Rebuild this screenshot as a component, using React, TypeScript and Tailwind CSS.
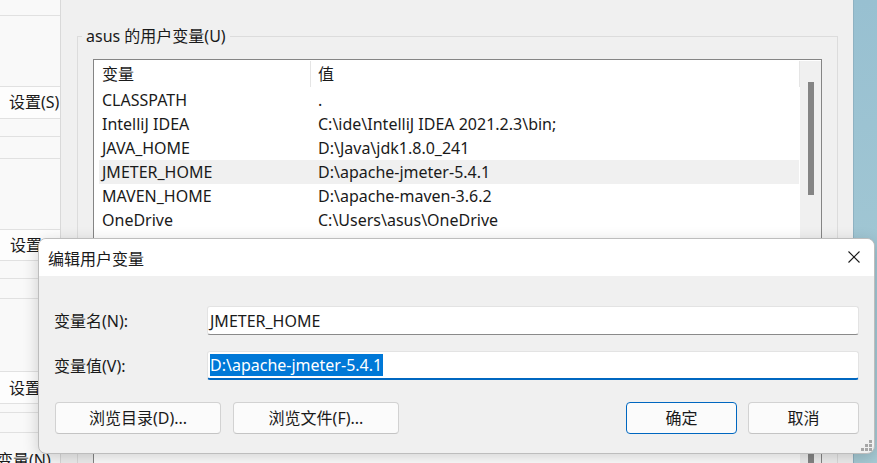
import React from "react";

const rows: [string, string][] = [
  ["CLASSPATH", "."],
  ["IntelliJ IDEA", "C:\\ide\\IntelliJ IDEA 2021.2.3\\bin;"],
  ["JAVA_HOME", "D:\\Java\\jdk1.8.0_241"],
  ["JMETER_HOME", "D:\\apache-jmeter-5.4.1"],
  ["MAVEN_HOME", "D:\\apache-maven-3.6.2"],
  ["OneDrive", "C:\\Users\\asus\\OneDrive"],
  ["OneDriveConsumer", "C:\\Users\\asus\\OneDrive"],
  ["Path", "C:\\Users\\asus\\AppData\\Local\\Microsoft\\WindowsApps;"],
  ["TEMP", "C:\\Users\\asus\\AppData\\Local\\Temp"],
  ["TMP", "C:\\Users\\asus\\AppData\\Local\\Temp"],
];

function LeftStrip() {
  const line = "border-b border-[#e1e1e1]";
  return (
    <div className="w-[61px] shrink-0 bg-[#f9f9f9] border-r border-[#d9d9d9] flex flex-col overflow-hidden text-[16px] leading-[20px] text-[#1a1a1a] whitespace-nowrap">
      <div className={`h-[16px] ${line}`} />
      <div className={`h-[71px] ${line}`} />
      <div className={`h-[32px] bg-[#fdfdfd] flex items-center pl-[9px] ${line}`}>设置(S).</div>
      <div className={`h-[18px] ${line}`} />
      <div className={`h-[22px] ${line}`} />
      <div className={`h-[71px] ${line}`} />
      <div className={`h-[32px] bg-[#fdfdfd] flex items-center pl-[10px] ${line}`}>设置</div>
      <div className={`h-[18px] ${line}`} />
      <div className={`h-[20px] ${line}`} />
      <div className={`h-[73px] ${line}`} />
      <div className={`h-[32px] bg-[#fdfdfd] flex items-center pl-[9px] ${line}`}>设置</div>
      <div className={`h-[9px] ${line}`} />
      <div className={`h-[20px] ${line}`} />
      <div className="h-[30px] flex items-end pl-0 -ml-[3px]">
        <span className="leading-[18px] -mb-[6px]">变量(N)...</span>
      </div>
    </div>
  );
}

function ListBox() {
  return (
    <div className="mx-[15px] mt-[22px] border border-[#858585] bg-white flex flex-1">
      <div className="flex-1 flex flex-col text-[16px] text-[#1a1a1a] whitespace-nowrap overflow-hidden">
        <div className="h-[28px] flex items-stretch shrink-0">
          <div className="w-[217px] border-r border-[#e5e5e5] my-[1px] pl-[8px] flex items-center">变量</div>
          <div className="flex-1 border-r border-[#e5e5e5] my-[1px] pl-[7px] flex items-center">值</div>
        </div>
        {rows.map(([k, v], i) => (
          <div
            key={k + i}
            className={`h-[24px] shrink-0 ml-[5px] mr-[1px] flex items-center ${k === "JMETER_HOME" ? "bg-[#f0f0f0]" : ""}`}
          >
            <div className="w-[219px] pl-[3px] overflow-hidden">{k}</div>
            <div className="flex-1 overflow-hidden">{v}</div>
          </div>
        ))}
      </div>
      <div className="w-[21px] shrink-0 bg-[#f0f0f0] mt-[1px] flex flex-col items-center">
        <div className="mt-[21px] w-[6px] h-[113px] bg-[#858585]" />
        <div className="mt-[259px] w-[6px] h-[12px] bg-[#858585]" />
      </div>
    </div>
  );
}

function Dialog() {
  return (
    <div className="absolute left-[38px] top-[238px] w-[837px] h-[216px] rounded-[8px] border border-[#bdbdbd] bg-[#f0f0f0] shadow-[0_4px_16px_rgba(0,0,0,0.18)] flex flex-col overflow-hidden text-[16px] text-[#1a1a1a]">
      <div className="h-[37px] bg-white flex items-center justify-between pl-[9px] pr-[14px] shrink-0">
        <span className="mt-[2px]">编辑用户变量</span>
        <svg width="12" height="12" viewBox="0 0 12 12" className="-mt-[2px]">
          <path d="M0.5 0.5 L11.5 11.5 M11.5 0.5 L0.5 11.5" stroke="#1a1a1a" strokeWidth="1.1" fill="none" />
        </svg>
      </div>
      <div className="flex-1 flex flex-col px-[15px] pt-[30px]">
        <div className="flex items-center h-[29px]">
          <div className="w-[153px] shrink-0">变量名(N):</div>
          <div className="flex-1 h-[29px] bg-white border border-[#e3e3e3] border-b-[#8a8a8a] rounded-[3px] flex items-center pl-[2px]">
            JMETER_HOME
          </div>
        </div>
        <div className="flex items-center h-[29px] mt-[16px]">
          <div className="w-[153px] shrink-0">变量值(V):</div>
          <div className="flex-1 h-[29px] bg-white border border-[#e3e3e3] border-b-2 border-b-[#0067c0] rounded-[3px] flex items-center pl-[2px]">
            <span className="bg-[#0078d7] text-white leading-[22px] pr-[1px]">D:\apache-jmeter-5.4.1</span>
          </div>
        </div>
        <div className="flex mt-[22px] ml-[1px] h-[32px]">
          <button className="w-[166px] h-[32px] bg-[#fbfbfb] border border-[#d2d2d2] border-b-[#c4c4c4] rounded-[4px]">浏览目录(D)...</button>
          <button className="w-[166px] h-[32px] ml-[12px] bg-[#fbfbfb] border border-[#d2d2d2] border-b-[#c4c4c4] rounded-[4px]">浏览文件(F)...</button>
          <div className="flex-1" />
          <button className="w-[111px] h-[32px] bg-[#fbfbfb] border border-[#0067c0] rounded-[4px]">确定</button>
          <button className="w-[111px] h-[32px] ml-[11px] bg-[#fbfbfb] border border-[#d2d2d2] border-b-[#c4c4c4] rounded-[4px]">取消</button>
        </div>
      </div>
      <div className="absolute right-[2px] bottom-[2px] w-[11px] h-[11px]">
        <div className="absolute left-[8px] top-[0px] w-[3px] h-[3px] bg-[#a6a6a6]" />
        <div className="absolute left-[4px] top-[4px] w-[3px] h-[3px] bg-[#a6a6a6]" />
        <div className="absolute left-[8px] top-[4px] w-[3px] h-[3px] bg-[#a6a6a6]" />
        <div className="absolute left-[0px] top-[8px] w-[3px] h-[3px] bg-[#a6a6a6]" />
        <div className="absolute left-[4px] top-[8px] w-[3px] h-[3px] bg-[#a6a6a6]" />
        <div className="absolute left-[8px] top-[8px] w-[3px] h-[3px] bg-[#a6a6a6]" />
      </div>
    </div>
  );
}

export default function App() {
  return (
    <div className="relative w-[877px] h-[463px] overflow-hidden flex font-['Noto_Sans','Noto_Sans_CJK_SC',sans-serif] text-[#1a1a1a]">
      <LeftStrip />
      <div className="w-[792px] shrink-0 bg-[#f0f0f0] flex flex-col pl-[16px] pr-[15px] pt-[36px]">
        <div className="relative flex-1 border border-[#dcdcdc] border-b-0 flex flex-col">
          <div className="absolute left-[4px] -top-[11px] px-[4px] bg-[#f0f0f0] text-[16px] leading-[20px] whitespace-nowrap">
            asus 的用户变量(U)
          </div>
          <ListBox />
        </div>
      </div>
      <div className="flex-1 bg-[linear-gradient(180deg,#98c0d1,#a7cbd5)] border-l border-[#8fb2c2]" />
      <Dialog />
    </div>
  );
}
